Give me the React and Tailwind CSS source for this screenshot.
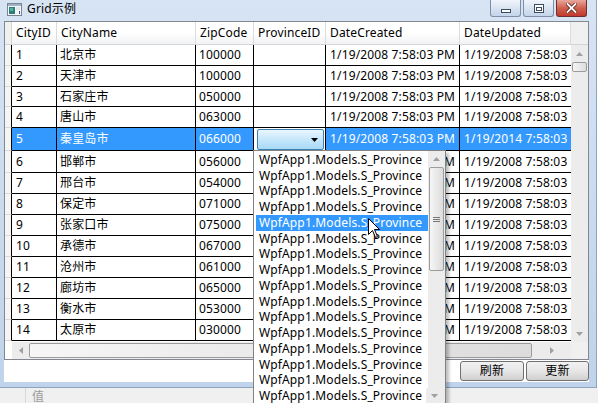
import React from 'react';

const cols = ['w-[45px]', 'w-[139px]', 'w-[58px]', 'w-[72px]', 'w-[134px]', 'w-[111px]'];
const heads = ['CityID', 'CityName', 'ZipCode', 'ProvinceID', 'DateCreated', 'DateUpdated'];

const rows = [
  { id: 1, name: '北京市', zip: '100000', h: 'h-[21px]' },
  { id: 2, name: '天津市', zip: '100000', h: 'h-[21px]' },
  { id: 3, name: '石家庄市', zip: '050000', h: 'h-[20px]' },
  { id: 4, name: '唐山市', zip: '063000', h: 'h-[21px]' },
  { id: 5, name: '秦皇岛市', zip: '066000', h: 'h-[23px]', selected: true },
  { id: 6, name: '邯郸市', zip: '056000', h: 'h-[22px]' },
  { id: 7, name: '邢台市', zip: '054000', h: 'h-[21px]' },
  { id: 8, name: '保定市', zip: '071000', h: 'h-[21px]' },
  { id: 9, name: '张家口市', zip: '075000', h: 'h-[21px]' },
  { id: 10, name: '承德市', zip: '067000', h: 'h-[21px]' },
  { id: 11, name: '沧州市', zip: '061000', h: 'h-[21px]' },
  { id: 12, name: '廊坊市', zip: '065000', h: 'h-[21px]' },
  { id: 13, name: '衡水市', zip: '053000', h: 'h-[21px]' },
  { id: 14, name: '太原市', zip: '030000', h: 'h-[21px]' },
];

const Arrow = ({ dir }) => {
  const pts = {
    up: '0,4 3.5,0 7,4',
    down: '0,0 3.5,4 7,0',
    left: '4,0 0,3.5 4,7',
    right: '0,0 4,3.5 0,7',
  }[dir];
  const vertical = dir === 'up' || dir === 'down';
  return (
    <svg width={vertical ? 7 : 4} height={vertical ? 4 : 7} className="block">
      <polygon points={pts} fill="#a0a0a0" />
    </svg>
  );
};

function Thumb({ className, grip }) {
  return (
    <div className={`rounded-[2px] border border-[#9c9c9c] bg-gradient-to-r from-[#f6f6f6] to-[#dcdcdc] flex items-center justify-center ${className}`}>
      {grip && (
        <div className="flex flex-col gap-[1px]">
          <div className="w-[7px] h-[1px] bg-[#777]" />
          <div className="w-[7px] h-[1px] bg-[#777]" />
          <div className="w-[7px] h-[1px] bg-[#777]" />
        </div>
      )}
    </div>
  );
}

function Cell({ w, children, last, className = '' }) {
  return (
    <div className={`${w} shrink-0 border-b border-black ${last ? '' : 'border-r'} pl-[3px] flex items-center overflow-hidden whitespace-nowrap ${className}`}>
      {children}
    </div>
  );
}

function Row({ r }) {
  const sel = r.selected;
  const date = '1/19/2008 7:58:03 PM';
  return (
    <div className={`flex ${r.h}`}>
      <div className="w-[7px] shrink-0 bg-[#f5f5f5] border-b border-[#d8d8d8] border-r border-r-black" />
      <div className={`flex ${sel ? 'bg-[#3399ff] text-white' : 'bg-white text-black'}`}>
        <Cell w={cols[0]} className="pl-[4px]">{r.id}</Cell>
        <Cell w={cols[1]}>{r.name}</Cell>
        <Cell w={cols[2]}>{r.zip}</Cell>
        <Cell w={cols[3]} className={sel ? 'bg-white pl-[1px] pr-[1px]' : ''}>
          {sel && (
            <div className="w-[68px] h-[21px] mt-[1px] rounded-[2px] border border-[#3c7fb1] bg-gradient-to-b from-[#eaf6fd] via-[#c6e7fb] to-[#a7d9f5] flex items-center justify-end pr-[5px]">
              <svg width="7" height="4"><polygon points="0,0 3.5,4 7,0" fill="#000" /></svg>
            </div>
          )}
        </Cell>
        <Cell w={cols[4]} className="pl-[4px]">{date}</Cell>
        <Cell w={cols[5]} last className="pl-[4px]">{sel ? '1/19/2014 7:58:03 PM' : date}</Cell>
      </div>
    </div>
  );
}

function CaptionButton({ kind }) {
  if (kind === 'close') {
    return (
      <div className="w-[31px] h-[17px] rounded-b-[3px] border border-t-0 border-[#6d2f2f] bg-gradient-to-b from-[#e8a79d] via-[#d0614f] to-[#c0392b] flex items-center justify-center">
        <svg width="11" height="10" viewBox="0 0 11 10">
          <path d="M1.5 1 L9.5 9 M9.5 1 L1.5 9" stroke="#5a1a14" strokeWidth="3.4" strokeLinecap="square" />
          <path d="M1.5 1 L9.5 9 M9.5 1 L1.5 9" stroke="#fff" strokeWidth="1.8" strokeLinecap="square" />
        </svg>
      </div>
    );
  }
  return (
    <div className="w-[31px] h-[17px] rounded-b-[3px] border border-t-0 border-[#7d8ea6] bg-gradient-to-b from-[#f1f5fb] via-[#d9e4f2] to-[#c4d4ea] flex items-center justify-center">
      {kind === 'min' ? (
        <div className="w-[10px] h-[4px] mt-[5px] border border-[#3e4c60] bg-white" />
      ) : (
        <div className="w-[10px] h-[9px] border border-[#3e4c60] bg-white flex items-center justify-center">
          <div className="w-[6px] h-[4px] mt-[1px] border border-[#3e4c60]" />
        </div>
      )}
    </div>
  );
}

export default function App() {
  const items = Array.from({ length: 17 });
  return (
    <div className="relative w-[598px] h-[403px] overflow-hidden bg-white text-[12px] leading-none tracking-[0.15px] font-[Noto_Sans,Noto_Sans_CJK_SC,sans-serif] text-black">
      {/* window */}
      <div className="w-[597px] h-[388px] flex flex-col bg-gradient-to-b from-[#d7e4f4] to-[#bfd3ea] border-r border-b border-[#8ea3be]">
        <div className="h-[21px] shrink-0 flex items-start">
          <div className="flex items-center h-[18px] pl-[7px] gap-[5px]">
            <svg width="15" height="13" viewBox="0 0 15 13">
              <rect x="0.5" y="0.5" width="14" height="12" fill="#f4f6f8" stroke="#7a8594" />
              <rect x="1" y="1" width="13" height="2" fill="#9fb2c8" />
              <rect x="2" y="4" width="6" height="7" fill="#2e7d7a" />
              <rect x="3" y="5" width="3" height="3" fill="#4fb3a3" />
              <rect x="9" y="4" width="4" height="3" fill="#dfe6ee" />
              <rect x="12" y="8" width="1" height="3" fill="#3a5a8a" />
            </svg>
            <span className="text-[12px]">Grid示例</span>
          </div>
          <div className="ml-auto flex gap-[2px] pr-[9px]">
            <CaptionButton kind="min" />
            <CaptionButton kind="max" />
            <CaptionButton kind="close" />
          </div>
        </div>
        <div className="flex-1 flex">
          <div className="w-[4px] shrink-0" />
          <div className="w-[585px] h-[361px] bg-white flex flex-col">
            {/* grid */}
            <div className="h-[339px] border border-[#828790] flex">
              <div className="flex flex-col w-[566px]">
                <div className="h-[23px] shrink-0 flex bg-gradient-to-b from-white via-white to-[#f1f2f4] border-b border-[#d5d5d5]">
                  <div className="w-[7px] shrink-0 border-r border-[#d5d5d5] bg-[#f0f0f0]" />
                  {heads.map((h, i) => (
                    <div key={h} className={`${cols[i]} shrink-0 border-r border-[#dcdcdc] pl-[4px] flex items-center overflow-hidden whitespace-nowrap`}>
                      {h}
                    </div>
                  ))}
                </div>
                <div className="flex-1 overflow-hidden">
                  {rows.map((r) => (
                    <Row key={r.id} r={r} />
                  ))}
                </div>
                <div className="h-[17px] shrink-0 flex bg-[#ececec]">
                  <div className="w-[7px] shrink-0 bg-white" />
                  <div className="w-[17px] flex items-center justify-center"><Arrow dir="left" /></div>
                  <Thumb className="w-[503px] h-[15px] mt-[1px]" />
                  <div className="flex-1 flex items-center justify-center"><Arrow dir="right" /></div>
                </div>
              </div>
              <div className="w-[17px] flex flex-col bg-[#ececec]">
                <div className="h-[23px] shrink-0 bg-[#f0f0f0] border-b border-[#d5d5d5]" />
                <div className="h-[17px] flex items-center justify-center"><Arrow dir="up" /></div>
                <Thumb className="h-[10px] w-[15px] ml-[1px]" />
                <div className="flex-1" />
                <div className="h-[17px] flex items-center justify-center"><Arrow dir="down" /></div>
                <div className="h-[17px] bg-[#f0f0f0]" />
              </div>
            </div>
            <div className="flex-1 flex items-start justify-end pt-[1px] gap-[2px]">
              <button className="w-[64px] h-[20px] rounded-[3px] border border-[#707070] bg-gradient-to-b from-[#f2f2f2] via-[#e6e6e6] to-[#d0d0d0] text-[12px] flex items-center justify-center">刷新</button>
              <button className="w-[63px] h-[20px] rounded-[3px] border border-[#707070] bg-gradient-to-b from-[#f2f2f2] via-[#e6e6e6] to-[#d0d0d0] text-[12px] flex items-center justify-center">更新</button>
            </div>
          </div>
        </div>
      </div>
      {/* area behind the window */}
      <div className="h-[15px] flex bg-[#f0f0f0]">
        <div className="w-[26px] border-r border-[#d8d8d8]" />
        <span className="pl-[6px] pt-[3px] text-[#9a9a9a]">值</span>
      </div>

      {/* open combo box list */}
      <div className="absolute left-[253px] top-[150px] w-[193px] h-[260px] bg-white border border-[#828282] shadow-[3px_3px_3px_rgba(0,0,0,0.25)] flex">
        <div className="flex-1 pt-[1px] pl-[2px]">
          {items.map((_, i) => (
            <div key={i} className={`h-[15.75px] flex items-center pl-[3px] whitespace-nowrap ${i === 4 ? 'bg-[#3399ff] text-white' : 'text-black'}`}>
              WpfApp1.Models.S_Province
            </div>
          ))}
        </div>
        <div className="w-[17px] flex flex-col bg-[#ececec]">
          <div className="h-[16px] flex items-center justify-center"><Arrow dir="up" /></div>
          <Thumb grip className="h-[104px] w-[15px] ml-[1px]" />
          <div className="flex-1" />
        </div>
      </div>
      <div className="absolute left-[426px] top-[388px] w-[17px] h-[15px] flex items-center justify-center bg-[#ececec]">
        <Arrow dir="down" />
      </div>

      {/* mouse pointer */}
      <svg className="absolute left-[368px] top-[218px]" width="13" height="21" viewBox="0 0 13 21">
        <path d="M0.5 0.5 L0.5 16.5 L4.5 12.5 L7.5 19.5 L9.5 18.5 L6.5 11.5 L11.5 11.5 Z" fill="#fff" stroke="#000" strokeWidth="1" strokeLinejoin="miter" />
      </svg>
    </div>
  );
}
